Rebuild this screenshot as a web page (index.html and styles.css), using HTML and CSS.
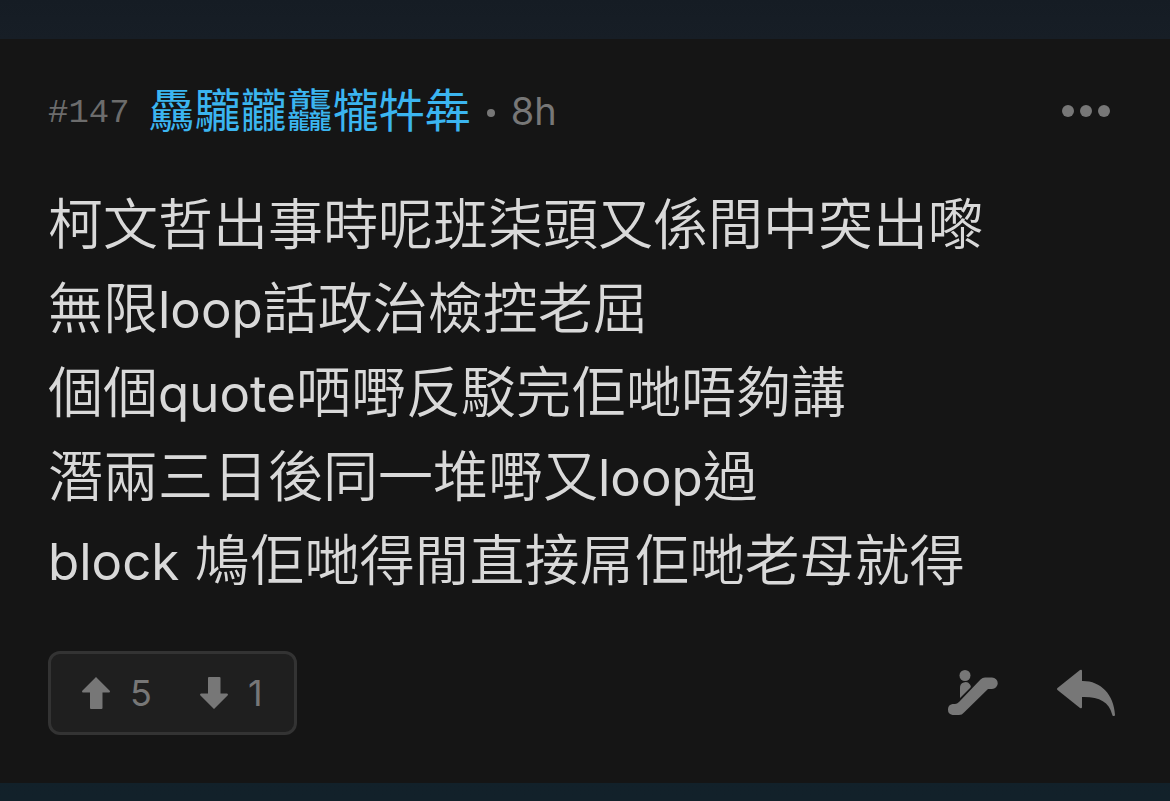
FILE: index.html
```html
<!DOCTYPE html>
<html lang="zh-HK">
<head>
    <meta charset="UTF-8">
    <meta name="viewport" content="width=device-width, initial-scale=1.0">
    <title>#147</title>
    <link rel="stylesheet" href="styles.css">
</head>
<body>
    <article class="post">
        <header class="post-header">
            <span class="floor">#147</span>
            <a class="author" href="#">驫䮾龖龘&#x24706;牪犇</a>
            <span class="dot"></span>
            <time class="time">8h</time>
            <button class="icon-button more" type="button" aria-label="More">
                <svg width="50" height="14" viewBox="0 0 50 14" fill="currentColor">
                    <circle cx="7" cy="7" r="6"/>
                    <circle cx="25" cy="7" r="6"/>
                    <circle cx="43" cy="7" r="6"/>
                </svg>
            </button>
        </header>
        <p class="content">
            柯文哲出事時呢班柒頭又係間中突出嚟<br>
            無限<span class="latin">loop</span>話政治檢控老屈<br>
            個個<span class="latin">quote</span>哂嘢反駁完佢哋唔夠講<br>
            潛兩三日後同一堆嘢又<span class="latin">loop</span>過<br>
            <span class="latin">block</span> 鳩佢哋得閒直接屌佢哋老母就得
        </p>
        <footer class="post-footer">
            <div class="votes">
                <button class="vote" type="button" aria-label="Like 5">
                    <svg width="28" height="32" viewBox="0 0 28 32" fill="currentColor">
                        <path d="M14 0 L28 14 Q28 15.500 27 15.500 H20.500 V31 Q20.500 32 19.500 32 H9 Q8 32 8 31 V15.500 H1 Q0 15.500 0 14 Z"/>
                    </svg>
                    <span>5</span>
                </button>
                <button class="vote" type="button" aria-label="Dislike 1">
                    <svg width="28" height="32" viewBox="0 0 28 32" fill="currentColor">
                        <path d="M14 32 L28 18 Q28 16.500 27 16.500 H20.500 V1 Q20.500 0 19.500 0 H9 Q8 0 8 1 V16.500 H1 Q0 16.500 0 18 Z"/>
                    </svg>
                    <span>1</span>
                </button>
            </div>
            <div class="actions">
                <button class="icon-button" type="button" aria-label="Push">
                    <svg width="52" height="46" viewBox="0 0 52 46" fill="currentColor">
                        <circle cx="18" cy="5.500" r="5.500"/>
                        <path d="M13 28 V18 A5.500 5.500 0 0 1 23 14.500 Q24.500 16.500 23.500 17.500 Z"/>
                        <path d="M38 7.500 H45 A5.700 5.700 0 0 1 45 19 H41 L17 42.500 Q15 45 12 45 H5.500 A5.600 5.600 0 0 1 5.500 34 H8 Q10 34 12 32 L33.500 9.500 Q35.500 7.500 38 7.500 Z"/>
                    </svg>
                </button>
                <button class="icon-button" type="button" aria-label="Reply">
                    <svg width="58" height="48" viewBox="0 0 58 48" fill="currentColor">
                        <path d="M0.500 19 L23 1 Q25 0 25 2 V12 C43 11.500 57 25 58 46 Q58 47 57 47 H56 Q55.500 47 55 45 C52 33 42 27.500 25 28 V38 Q25 40 23 39 L0.500 21 Q-0.500 20 0.500 19 Z"/>
                    </svg>
                </button>
            </div>
        </footer>
    </article>
</body>
</html>
```

FILE: styles.css
```css
* {
    box-sizing: border-box;
}
body {
    margin: 0;
    min-height: 100vh;
    padding: 39px 0 18px;
    display: flex;
    background: linear-gradient(#151c24 0, #171e26 39px, #12212a 100%);
    font-family: "Liberation Sans", "Noto Sans CJK TC", sans-serif;
    color: #d9d9d9;
}
.post {
    flex: 1;
    display: flex;
    flex-direction: column;
    padding: 40px 52px 48px 48px;
    background: #151515;
}
.post-header {
    display: flex;
    align-items: center;
    height: 64px;
    color: #777;
}
.floor {
    margin-right: 19px;
    padding-top: 4px;
    font-family: "Liberation Mono", monospace;
    font-size: 34px;
    color: #6c6c6c;
}
.author {
    font-size: 46px;
    line-height: 64px;
    color: #3bb5f0;
    text-decoration: none;
}
.dot {
    width: 8px;
    height: 8px;
    margin: 4px 16px 0;
    border-radius: 50%;
    background: #777;
}
.time {
    font-family: Inter, sans-serif;
    font-size: 38px;
}
button {
    padding: 0;
    border: none;
    background: none;
    font: inherit;
    color: #777;
    cursor: pointer;
}
svg {
    display: block;
}
.more {
    margin-left: auto;
    margin-right: 7px;
}
.content {
    margin: 40px 0 48px;
    font-size: 55px;
    font-weight: 350;
    line-height: 84px;
}
.latin {
    font-family: Inter, sans-serif;
    font-size: 51px;
    font-weight: 400;
    line-height: 1;
}
.post-footer {
    display: flex;
    align-items: center;
    justify-content: space-between;
}
.votes {
    display: flex;
    gap: 48px;
    height: 84px;
    padding: 0 31px;
    border: 3px solid #333;
    border-radius: 12px;
    background: #1f1f1f;
}
.vote {
    display: flex;
    align-items: center;
    gap: 20px;
    font-family: Inter, sans-serif;
    font-size: 36px;
}
.actions {
    display: flex;
    align-items: center;
    gap: 58px;
    margin-right: 3px;
}
```
